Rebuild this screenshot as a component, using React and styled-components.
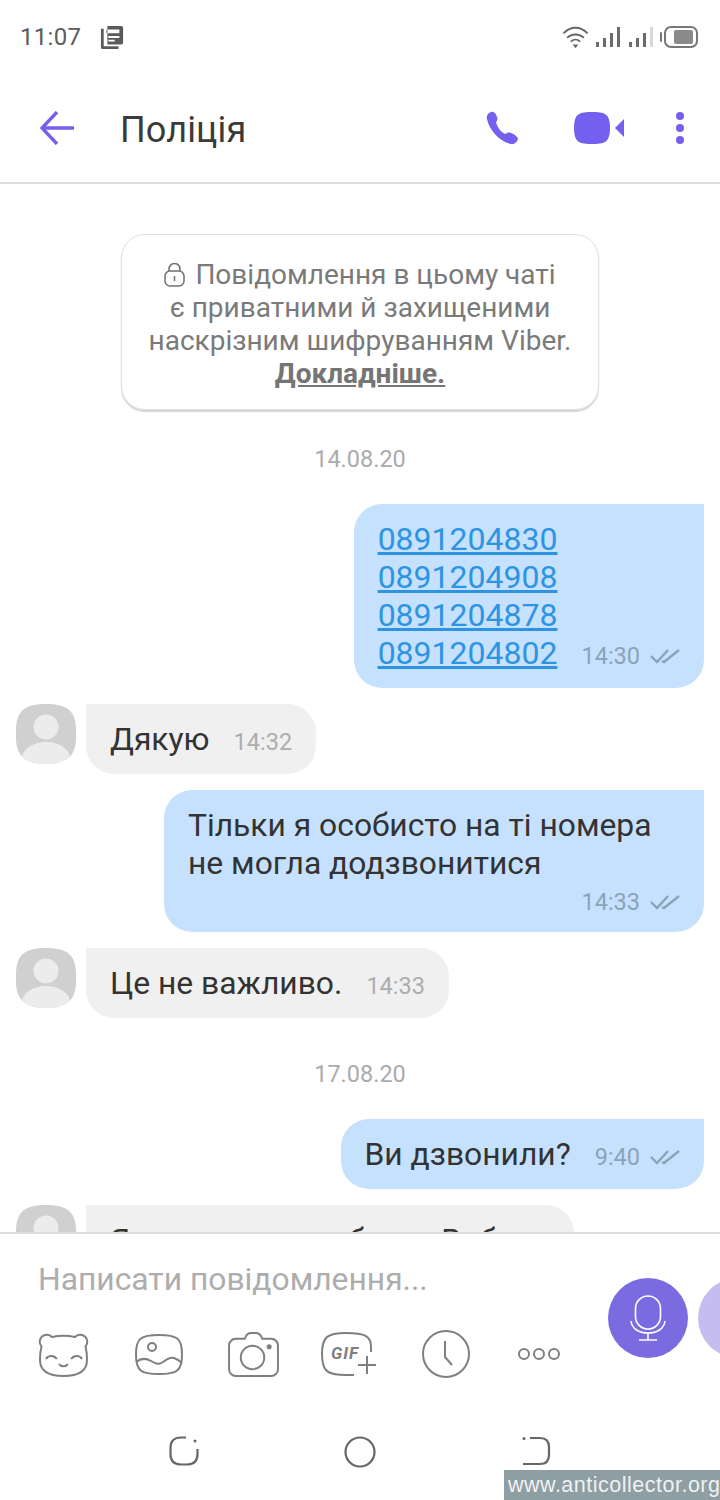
import React from 'react';
import styled, { createGlobalStyle } from 'styled-components';

const Global = createGlobalStyle`
  html, body { margin: 0; padding: 0; background: #fff; }
  body { width: 720px; height: 1500px; overflow: hidden; font-family: Roboto, "Noto Sans", sans-serif; }
  * { box-sizing: border-box; }
`;

const Screen = styled.div`
  width: 720px; height: 1500px; display: flex; flex-direction: column; background: #fff; overflow: hidden; position: relative;
`;
const StatusBar = styled.div`
  height: 72px; flex: none; display: flex; align-items: center; padding: 1px 22px 0 20px; color: #5a5a5a;
`;
const Clock = styled.span`
  font-size: 24px; letter-spacing: .3px; margin-right: 19px; color: #5c5c5c;
`;
const StatusRight = styled.div`
  margin-left: auto; display: flex; align-items: center; gap: 7px;
`;
const Header = styled.header`
  height: 112px; flex: none; display: flex; align-items: center; padding: 1px 36px 0 40px; border-bottom: 2px solid #dcdcdc;
`;
const Title = styled.h1`
  margin: 5px 0 0 46px; font-weight: 400; font-size: 36px; color: #3a3a3a; flex: 1; letter-spacing: .15px;
`;
const HeaderActions = styled.div`
  display: flex; align-items: center; gap: 56px;
`;
const ActionIcon = styled.svg`
  display: block; flex: none; fill: #7360ee; margin-left: ${p => p.$ml ?? 0}px;
`;
const Chat = styled.main`
  flex: 1; min-height: 0; overflow: hidden; display: flex; flex-direction: column; padding: 50px 16px 0;
`;
const Notice = styled.div`
  width: 478px; height: 176px; flex: none; align-self: center; border: 1px solid #dedede; border-radius: 24px;
  box-shadow: 0 2px 1px #d4d4d4; text-align: center; font-size: 28px; line-height: 33px; color: #7a7a7a; padding: 23px 0 0; white-space: nowrap;
`;
const NoticeLink = styled.a`
  font-weight: 700; text-decoration: underline; color: #757575; display: block;
`;
const LockGlyph = styled.svg`
  vertical-align: -3px; margin-right: 10px;
`;
const DateLabel = styled.div`
  text-align: center; font-size: 23.5px; line-height: 30px; color: #ababab; margin: ${p => p.$top}px 0 ${p => p.$bottom}px;
`;
const Row = styled.div`
  display: flex; flex: none; margin-top: ${p => p.$top ?? 16}px; justify-content: ${p => p.$mine ? 'flex-end' : 'flex-start'};
  gap: 10px;
`;
const Avatar = styled.svg`
  flex: none; display: block;
`;
const Bubble = styled.div`
  font-size: 31.8px; line-height: 38px; color: #333; padding: 16px 24px;
  background: ${p => p.$mine ? '#c5e1fd' : '#f0f0f0'};
  border-radius: ${p => p.$mine ? '28px 0 28px 28px' : '0 28px 28px 28px'};
  height: ${p => p.$h}px; flex: none; white-space: nowrap;
  ${p => p.$w ? `width: ${p.$w}px;` : ''}
`;
const InlineMeta = styled.div`
  display: flex; align-items: flex-end; gap: 24px;
`;
const Time = styled.span`
  font-size: 23.5px; line-height: 30px; margin-bottom: 1px; color: ${p => p.$mine ? '#8ba3b8' : '#adadad'}; display: inline-flex; align-items: center; gap: 10px; white-space: nowrap;
`;
const Numbers = styled.div`
  display: flex; flex-direction: column;
`;
const NumberLink = styled.a`
  color: #2d94e4; font-size: 32px; text-decoration: underline; display: block;
`;
const FootMeta = styled.div`
  display: flex; justify-content: flex-end; margin-top: 5px;
`;
const Composer = styled.footer`
  height: 268px; flex: none; border-top: 2px solid #dcdcdc; background: #fff; display: flex; flex-direction: column; position: relative; z-index: 1;
`;
const ComposerMain = styled.div`
  display: flex; height: 166px;
`;
const ComposerLeft = styled.div`
  width: 608px; flex: none; padding: 26px 0 0 38px;
`;
const Placeholder = styled.div`
  font-size: 31.8px; line-height: 38px; color: #adadad;
`;
const Tools = styled.div`
  display: flex; align-items: center; height: 48px; margin-top: 32px;
`;
const ToolIcon = styled.svg`
  flex: none; display: block; margin-left: ${p => p.$ml ?? 0}px; fill: none; stroke: #7f7f7f; stroke-width: 2;
`;
const GifLabel = styled.text`
  font-family: Roboto, sans-serif; font-style: italic; font-weight: 700; font-size: 17px; letter-spacing: 1px; fill: #7f7f7f; stroke: none;
`;
const RoundButton = styled.div`
  width: 80px; height: 80px; flex: none; border-radius: 50%; background: ${p => p.$bg}; display: flex; align-items: center; justify-content: center; margin: 44px 10px 0 0;
`;
const NavBar = styled.nav`
  flex: 1; display: flex; justify-content: center; align-items: flex-start; gap: 145px; padding-top: 36px;
`;
const Watermark = styled.div`
  position: absolute; right: 0; bottom: 0; z-index: 2; width: 216px; height: 30px; background: #8f9ea2; color: #eef2f2;
  font-family: "Liberation Sans", Arial, sans-serif; font-size: 21.5px; line-height: 30px; padding-left: 4px; white-space: nowrap; letter-spacing: .5px; overflow: hidden;
`;

const S = '#7f7f7f';
const Person = () => (
  <Avatar width="60" height="60" viewBox="0 0 60 60">
    <defs><clipPath id="sq"><path d="M30 0C50 0 60 6 60 26v8C60 52 50 60 30 60S0 52 0 34v-8C0 6 10 0 30 0Z"/></clipPath></defs>
    <g clipPath="url(#sq)">
      <rect width="60" height="60" fill="#d0d0d0"/>
      <circle cx="30" cy="23" r="12.5" fill="#ececec"/>
      <ellipse cx="30" cy="54" rx="24" ry="16" fill="#ececec"/>
    </g>
  </Avatar>
);
const Ticks = () => (
  <svg width="30" height="16" viewBox="0 0 30 16" fill="none" stroke="#8ba3b8" strokeWidth="2.4">
    <path d="M1 8l6 6L18 2"/><path d="M12 13l2 1L29 2"/>
  </svg>
);

export default function App() {
  return (
    <Screen>
      <Global />
      <StatusBar>
        <Clock>11:07</Clock>
        <svg width="24" height="24" viewBox="0 0 24 26" fill="#5a5a5a">
          <path d="M3 1h19a2 2 0 0 1 2 2v16a2 2 0 0 1-2 2H7V1Zm3 4v4h14V5ZM8 12v2h12v-2Zm0 4v2h7v-2Z" fillRule="evenodd"/>
          <path d="M0 4h3v19h16v3H2a2 2 0 0 1-2-2Z"/>
        </svg>
        <StatusRight>
          <svg width="27" height="26" viewBox="0 0 28 28" fill="none" stroke="#666" strokeWidth="2">
            <path d="M1 10C9 2 19 2 27 10"/><path d="M5 15c5-5 13-5 18 0"/><path d="M9 19c3-3 7-3 10 0"/>
            <path d="M11 22h6l-3 4Z" fill="#666" stroke="none"/>
          </svg>
          <svg width="57" height="20" viewBox="0 0 57 20" fill="#6c6c6c">
            <rect x="0" y="15" width="3" height="5"/><rect x="7" y="11" width="3" height="9"/><rect x="14" y="6" width="3" height="14"/><rect x="21" y="0" width="3" height="20"/>
            <rect x="33" y="15" width="3" height="5"/><rect x="40" y="11" width="3" height="9"/><rect x="47" y="6" width="3" height="14"/><rect x="54" y="0" width="3" height="20" fill="#d8d8d8"/>
          </svg>
          <svg width="38" height="22" viewBox="0 0 38 22">
            <rect x="0" y="6" width="2" height="10" rx="1" fill="#777"/>
            <rect x="5" y="1" width="32" height="20" rx="6" fill="none" stroke="#777" strokeWidth="2"/>
            <rect x="14" y="4" width="19" height="14" rx="2" fill="#8a8a8a"/>
          </svg>
        </StatusRight>
      </StatusBar>
      <Header>
        <svg width="34" height="34" viewBox="0 0 34 34" fill="none" stroke="#7360ee" strokeWidth="3.4">
          <path d="M17 1 2 17l15 16M2 17h32"/>
        </svg>
        <Title>Поліція</Title>
        <HeaderActions>
          <ActionIcon width="32" height="34" viewBox="0 0 32 34">
            <path d="M5 1C8 0 10 3 11 6c1 2 0 4-1 5 1 5 5 10 9 12 2-1 4-2 6-1 3 1 7 4 7 6-1 3-4 6-7 5C14 31 3 19 1 8 0 5 2 2 5 1Z"/>
          </ActionIcon>
          <ActionIcon width="50" height="32" viewBox="0 0 50 32">
            <path d="M18 0c12 0 18 1 18 16S30 32 18 32 0 31 0 16 6 0 18 0Z"/>
            <path d="M50 7v18l-9-9Z"/>
          </ActionIcon>
          <ActionIcon width="8" height="32" viewBox="0 0 8 32" $ml={-4}>
            <circle cx="4" cy="4" r="4"/><circle cx="4" cy="16" r="4"/><circle cx="4" cy="28" r="4"/>
          </ActionIcon>
        </HeaderActions>
      </Header>
      <Chat>
        <Notice>
          <LockGlyph width="21" height="24" viewBox="0 0 21 24" fill="none" stroke="#6f6f6f" strokeWidth="1.5">
            <rect x="1" y="8" width="19" height="15" rx="5"/><path d="M5 8V6a5.5 5.5 0 0 1 11 0v2"/><path d="M10.500 13v5"/>
          </LockGlyph>
          Повідомлення в цьому чаті<br/>
          є приватними й захищеними<br/>
          наскрізним шифруванням Viber.
          <NoticeLink>Докладніше.</NoticeLink>
        </Notice>
        <DateLabel $top={34} $bottom={30}>14.08.20</DateLabel>
        <Row $mine $top={0}>
          <Bubble $mine $h={184}>
            <InlineMeta>
              <Numbers>
                <NumberLink>0891204830</NumberLink>
                <NumberLink>0891204908</NumberLink>
                <NumberLink>0891204878</NumberLink>
                <NumberLink>0891204802</NumberLink>
              </Numbers>
              <Time $mine>14:30 <Ticks /></Time>
            </InlineMeta>
          </Bubble>
        </Row>
        <Row>
          <Person />
          <Bubble $h={70}>
            <InlineMeta><span>Дякую</span><Time>14:32</Time></InlineMeta>
          </Bubble>
        </Row>
        <Row $mine>
          <Bubble $mine $h={142} $w={540}>
            Тільки я особисто на ті номера<br/>не могла додзвонитися
            <FootMeta><Time $mine>14:33 <Ticks /></Time></FootMeta>
          </Bubble>
        </Row>
        <Row>
          <Person />
          <Bubble $h={70}>
            <InlineMeta><span>Це не важливо.</span><Time>14:33</Time></InlineMeta>
          </Bubble>
        </Row>
        <DateLabel $top={41} $bottom={30}>17.08.20</DateLabel>
        <Row $mine $top={0}>
          <Bubble $mine $h={70}>
            <InlineMeta><span>Ви дзвонили?</span><Time $mine>9:40 <Ticks /></Time></InlineMeta>
          </Bubble>
        </Row>
        <Row>
          <Person />
          <Bubble $h={70} $w={488}>Я не змогла особисто Вибер</Bubble>
        </Row>
      </Chat>
      <Composer>
        <ComposerMain>
          <ComposerLeft>
            <Placeholder>Написати повідомлення...</Placeholder>
            <Tools>
              <ToolIcon width="51" height="45" viewBox="0 0 51 45">
                <path d="M14 5C21 3.500 30 3.500 37 5A7 7 0 1 1 47.500 14.500C49 20 49 25 49 28 49 39 40 44 25.500 44S2 39 2 28C2 25 2 20 3.500 14.500A7 7 0 1 1 14 5Z"/>
                <path d="M8 27c2-4 8-4 11 0M33 27c3-4 9-4 11 0M21 32c2 3 7 3 9 0"/>
              </ToolIcon>
              <ToolIcon width="48" height="41" viewBox="0 0 48 41" $ml={46}>
                <path d="M24 1c18 0 23 3 23 19.500S42 40 24 40 1 37 1 20.500 6 1 24 1Z"/>
                <circle cx="17" cy="13" r="4"/>
                <path d="M1 28c5-4 10-4 15-1s8 4 12 1 8-5 11-4 6 3 8 5"/>
              </ToolIcon>
              <ToolIcon width="51" height="45" viewBox="0 0 52 46" $ml={45}>
                <path d="M17 7l2-4c1-1 2-2 4-2h6c2 0 3 1 4 2l2 4h9c4 0 7 3 7 7v24c0 4-3 7-7 7H8c-4 0-7-3-7-7V14c0-4 3-7 7-7Z"/>
                <circle cx="25" cy="26" r="12"/>
                <circle cx="42" cy="15" r="1.600" fill={S}/>
              </ToolIcon>
              <ToolIcon width="56" height="44" viewBox="0 0 56 44" $ml={42}>
                <path d="M50 20V15C50 4 44 1 25 1S1 5 1 22s5 21 24 21h8"/>
                <GifLabel x="10" y="27">GIF</GifLabel>
                <path d="M46 24v18M37 33h18"/>
              </ToolIcon>
              <ToolIcon width="48" height="48" viewBox="0 0 48 48" $ml={45}>
                <circle cx="24" cy="24" r="23"/><path d="M23 11v16l7 8"/>
              </ToolIcon>
              <ToolIcon width="44" height="14" viewBox="0 0 44 14" $ml={47}>
                <circle cx="7" cy="7" r="5"/><circle cx="22" cy="7" r="5"/><circle cx="37" cy="7" r="5"/>
              </ToolIcon>
            </Tools>
          </ComposerLeft>
          <RoundButton $bg="#7a6ce0">
            <svg width="36" height="46" viewBox="0 0 36 46" fill="none" stroke="#fff" strokeWidth="1.600">
              <rect x="5.500" y="1" width="25" height="33" rx="12.500"/>
              <path d="M1 26c1 8 8 12 17 12s16-4 17-12M18 38v7M9 45h18"/>
            </svg>
          </RoundButton>
          <RoundButton $bg="#c5bdf0" />
        </ComposerMain>
        <NavBar>
          <svg width="30" height="30" viewBox="0 0 30 30" fill="none" stroke="#666" strokeWidth="2.2">
            <path d="M17 1.500H12C5 1.500 1.500 5 1.500 12v6C1.500 25 5 28.500 12 28.500h6c7 0 10.500-3.500 10.500-10.500v-5"/><circle cx="26" cy="5" r="1.500" fill="#666" stroke="none"/>
          </svg>
          <svg width="32" height="32" viewBox="0 0 32 32" fill="none" stroke="#666" strokeWidth="2.200">
            <circle cx="16" cy="16" r="14.500"/>
          </svg>
          <svg width="30" height="30" viewBox="0 0 30 30" fill="none" stroke="#666" strokeWidth="2.2">
            <path d="M9 2h10c6 0 9 3 9 9v8c0 6-3 9-9 9H2"/><circle cx="3" cy="2.500" r="1.500" fill="#666" stroke="none"/>
          </svg>
        </NavBar>
      </Composer>
      <Watermark>www.anticollector.org</Watermark>
    </Screen>
  );
}
